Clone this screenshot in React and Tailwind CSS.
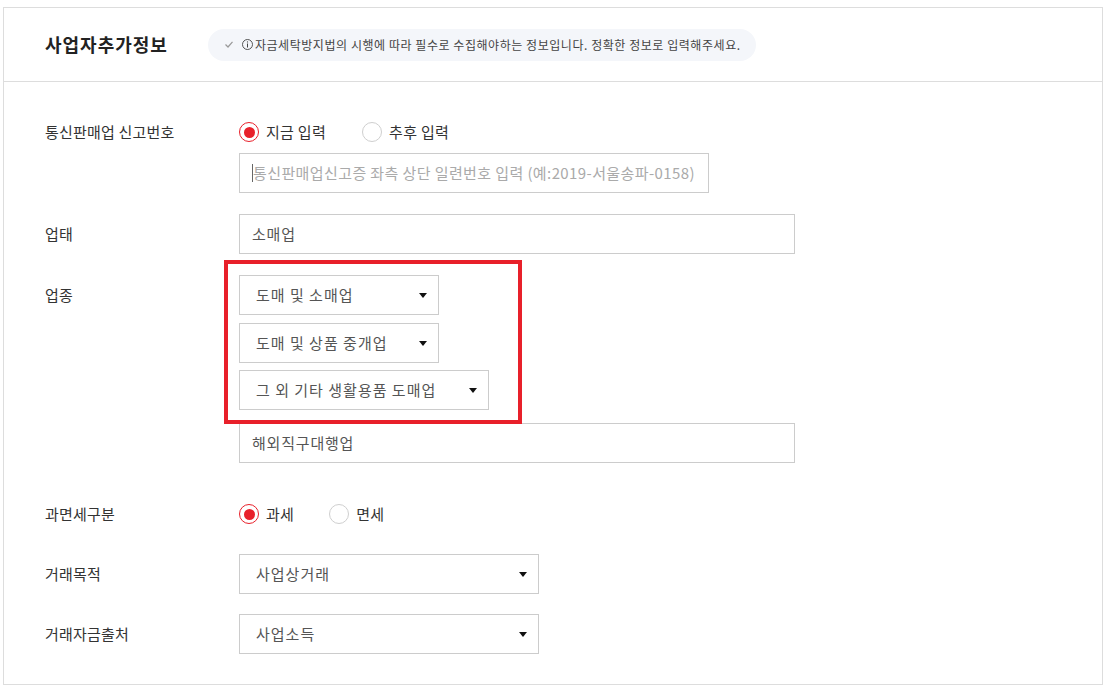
import React from 'react';

const font = { fontFamily: '"Noto Sans CJK KR", "Noto Sans", sans-serif' };

const Radio = ({ checked, label }) => (
  <label className="flex items-center h-5">
    {checked ? (
      <span className="w-5 h-5 rounded-full border border-[#e8202a] flex items-center justify-center">
        <span className="w-[11px] h-[11px] rounded-full bg-[#e8202a]" />
      </span>
    ) : (
      <span className="w-5 h-5 rounded-full border border-[#cfcfcf]" />
    )}
    <span className="ml-[7px] text-[15px] text-[#333] tracking-[0.3px]">{label}</span>
  </label>
);

const Select = ({ value, className }) => (
  <div className={`h-10 border border-[#cccccc] flex items-center justify-between pl-4 pr-[11px] ${className}`}>
    <span className="text-[15px] text-[#555] tracking-[1px]">{value}</span>
    <svg width="8" height="5" viewBox="0 0 8 5">
      <path d="M0 0h8L4 5z" fill="#111" />
    </svg>
  </div>
);

const Input = ({ value, placeholder, className }) => (
  <div className={`h-10 border border-[#cccccc] flex items-center px-3 ${className}`}>
    {value ? (
      <span className="text-[15px] text-[#555] tracking-[0.8px]">{value}</span>
    ) : (
      <span className="text-[15px] text-[#aaa] tracking-[0.4px] border-l border-[#666] leading-[18px]">{placeholder}</span>
    )}
  </div>
);

const Row = ({ label, labelH = 'h-10', className = '', children }) => (
  <div className={`flex items-start ${className}`}>
    <div className={`w-[194px] shrink-0 flex items-center text-[15px] text-[#333] tracking-[0.2px] ${labelH}`}>{label}</div>
    <div className="flex-1">{children}</div>
  </div>
);

export default function App() {
  return (
    <div className="bg-white w-[1105px] h-[687px] pt-[7px] pl-[3px] pr-[2px]" style={font}>
      <div className="border border-[#dddddd] h-[678px]">
        <div className="h-[74px] border-b border-[#dddddd] flex items-center pl-[41px]">
          <h2 className="text-[18px] font-bold text-[#222] tracking-[1px]">사업자추가정보</h2>
          <div className="ml-[40px] h-8 rounded-full bg-[#f4f6fa] flex items-center pl-[17px] pr-[15px] text-[12px] text-[#444]">
            <svg width="8" height="7" viewBox="0 0 8 7" className="mr-[9px]">
              <path d="M0.5 3.5L3 6L7.5 0.8" stroke="#999" strokeWidth="1.2" fill="none" />
            </svg>
            <svg width="11" height="11" viewBox="0 0 11 11" className="mr-[2px]">
              <circle cx="5.5" cy="5.5" r="5" stroke="#444" strokeWidth="0.9" fill="none" />
              <path d="M5.5 4.5v4" stroke="#444" strokeWidth="1" />
              <circle cx="5.5" cy="2.9" r="0.6" fill="#444" />
            </svg>
            <span className="tracking-[0.55px]">자금세탁방지법의 시행에 따라 필수로 수집해야하는 정보입니다. 정확한 정보로 입력해주세요.</span>
          </div>
        </div>

        <div className="pl-[41px] pt-[40px]">
          <Row label="통신판매업 신고번호" labelH="h-5">
            <div className="flex items-center gap-[36px]">
              <Radio checked label="지금 입력" />
              <Radio label="추후 입력" />
            </div>
            <Input className="w-[470px] mt-[11px]" placeholder="통신판매업신고증 좌측 상단 일련번호 입력 (예:2019-서울송파-0158)" />
          </Row>

          <Row label="업태" className="mt-[21px]">
            <Input className="w-[556px]" value="소매업" />
          </Row>

          <Row label="업종" className="mt-[21px]">
            <div className="relative">
              <Select className="w-[200px]" value="도매 및 소매업" />
              <Select className="w-[200px] mt-2" value="도매 및 상품 중개업" />
              <Select className="w-[250px] mt-[7px]" value="그 외 기타 생활용품 도매업" />
              <Input className="w-[556px] mt-[13px]" value="해외직구대행업" />
              <div className="absolute left-[-15px] top-[-15px] w-[298px] h-[164px] border-4 border-[#e8202a] pointer-events-none" />
            </div>
          </Row>

          <Row label="과면세구분" labelH="h-5" className="mt-[41px]">
            <div className="flex items-center gap-[35px]">
              <Radio checked label="과세" />
              <Radio label="면세" />
            </div>
          </Row>

          <Row label="거래목적" className="mt-[30px]">
            <Select className="w-[300px]" value="사업상거래" />
          </Row>

          <Row label="거래자금출처" className="mt-[20px]">
            <Select className="w-[300px]" value="사업소득" />
          </Row>
        </div>
      </div>
    </div>
  );
}
